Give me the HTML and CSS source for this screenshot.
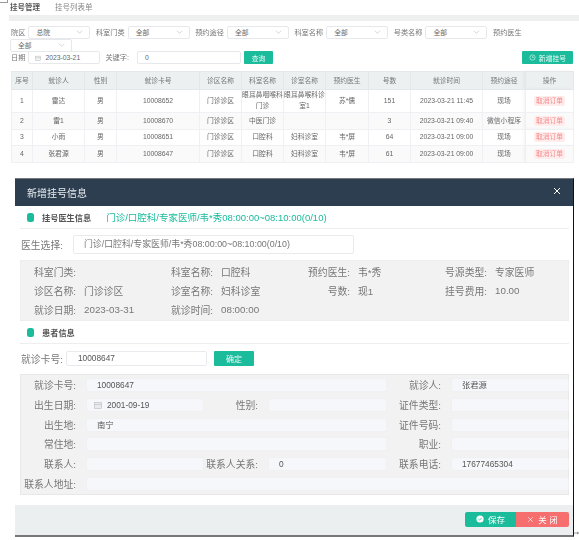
FILE: index.html
```html
<!DOCTYPE html>
<html lang="zh-CN">
<head>
<meta charset="utf-8">
<title>新增挂号信息</title>
<link rel="stylesheet" href="styles.css">
</head>
<body>
<div class="page">
  <span class="corner"></span>
  <section class="list">
    <div class="crumb"><b>挂号管理</b><span>挂号列表单</span></div>
    <div class="band"></div>
    <div class="filters">
      <label class="fl">院区</label><div class="sel">总院<svg class="chev" viewBox="0 0 8 4"><path d="M1 .5 4 3.5 7 .5"/></svg></div>
      <label class="fl">科室门类</label><div class="sel">全部<svg class="chev" viewBox="0 0 8 4"><path d="M1 .5 4 3.5 7 .5"/></svg></div>
      <label class="fl">预约途径</label><div class="sel">全部<svg class="chev" viewBox="0 0 8 4"><path d="M1 .5 4 3.5 7 .5"/></svg></div>
      <label class="fl">科室名称</label><div class="sel">全部<svg class="chev" viewBox="0 0 8 4"><path d="M1 .5 4 3.5 7 .5"/></svg></div>
      <label class="fl">号类名称</label><div class="sel">全部<svg class="chev" viewBox="0 0 8 4"><path d="M1 .5 4 3.5 7 .5"/></svg></div>
      <label class="fl">预约医生</label><div class="sel wrapsel">全部<svg class="chev" viewBox="0 0 8 4"><path d="M1 .5 4 3.5 7 .5"/></svg></div>
    </div>
    <div class="search">
      <label class="fl">日期</label>
      <div class="sel date"><svg class="cal" viewBox="0 0 8 8"><rect x=".5" y="1.5" width="7" height="6"/><path d="M.5 3.5h7"/></svg>2023-03-21</div>
      <label class="fl kw">关键字:</label>
      <div class="sel keyword">0</div>
      <button class="btn query">查询</button>
      <button class="btn add"><svg class="clock" viewBox="0 0 8 8"><circle cx="4" cy="4" r="3"/><path d="M4 2.5V4h1.5"/></svg>新增挂号</button>
    </div>
    <table class="grid">
      <colgroup>
        <col class="c1"><col class="c2"><col class="c3"><col class="c4"><col class="c5"><col class="c6">
        <col class="c7"><col class="c8"><col class="c9"><col class="c10"><col class="c11"><col class="c12">
      </colgroup>
      <thead>
        <tr><th>序号</th><th>就诊人</th><th>性别</th><th>就诊卡号</th><th>诊区名称</th><th>科室名称</th><th>诊室名称</th><th>预约医生</th><th>号数</th><th>就诊时间</th><th>预约途径</th><th class="op">操作</th></tr>
      </thead>
      <tbody>
        <tr class="tall"><td>1</td><td>雷达</td><td>男</td><td>10008652</td><td>门诊诊区</td><td>眼耳鼻咽喉科门诊</td><td>眼耳鼻喉科诊室1</td><td>苏*儒</td><td>151</td><td>2023-03-21 11:45</td><td>现场</td><td class="op"><span class="cancel">取消订单</span></td></tr>
        <tr class="alt"><td>2</td><td>雷1</td><td>男</td><td>10008670</td><td>门诊诊区</td><td>中医门诊</td><td></td><td></td><td>3</td><td>2023-03-21 09:40</td><td class="nw">微信小程序</td><td class="op"><span class="cancel">取消订单</span></td></tr>
        <tr><td>3</td><td>小雨</td><td>男</td><td>10008651</td><td>门诊诊区</td><td>口腔科</td><td>妇科诊室</td><td>韦*屏</td><td>64</td><td>2023-03-21 09:00</td><td>现场</td><td class="op"><span class="cancel">取消订单</span></td></tr>
        <tr class="alt"><td>4</td><td>张君源</td><td>男</td><td>10008647</td><td>门诊诊区</td><td>口腔科</td><td>妇科诊室</td><td>韦*屏</td><td>61</td><td>2023-03-21 09:00</td><td>现场</td><td class="op"><span class="cancel">取消订单</span></td></tr>
      </tbody>
    </table>
  </section>

  <section class="dialog">
    <header class="dhead">
      <h1>新增挂号信息</h1>
      <svg class="close" viewBox="0 0 8 8"><path d="M1 1 7 7M7 1 1 7"/></svg>
    </header>
    <div class="dbody">
      <div class="sect first">
        <i class="pill"></i><b>挂号医生信息</b>
        <span class="picked">门诊/口腔科/专家医师/韦*秀08:00:00~08:10:00(0/10)</span>
      </div>
      <div class="docrow">
        <label>医生选择:</label>
        <div class="docsel">门诊/口腔科/专家医师/韦*秀08:00:00~08:10:00(0/10)</div>
      </div>
      <div class="info">
        <div class="pair"><label>科室门类:</label><span></span></div>
        <div class="pair"><label>科室名称:</label><span>口腔科</span></div>
        <div class="pair"><label>预约医生:</label><span>韦*秀</span></div>
        <div class="pair"><label>号源类型:</label><span>专家医师</span></div>
        <div class="pair"><label>诊区名称:</label><span>门诊诊区</span></div>
        <div class="pair"><label>诊室名称:</label><span>妇科诊室</span></div>
        <div class="pair"><label>号数:</label><span>现1</span></div>
        <div class="pair"><label>挂号费用:</label><span>10.00</span></div>
        <div class="pair"><label>就诊日期:</label><span>2023-03-31</span></div>
        <div class="pair"><label>就诊时间:</label><span>08:00:00</span></div>
      </div>
      <div class="sect second"><i class="pill"></i><b>患者信息</b></div>
      <div class="cardrow">
        <label>就诊卡号:</label>
        <div class="cardinput">10008647</div>
        <button class="btn confirm">确定</button>
      </div>
      <div class="form">
        <label>就诊卡号:</label><div class="in s3">10008647</div>
        <label>就诊人:</label><div class="in">张君源</div>

        <label>出生日期:</label><div class="in datein"><svg class="cal" viewBox="0 0 8 8"><rect x=".5" y="1.5" width="7" height="6"/><path d="M.5 3.5h7"/></svg>2001-09-19</div>
        <label>性别:</label><div class="in"></div>
        <label>证件类型:</label><div class="in"></div>

        <label>出生地:</label><div class="in s3">南宁</div>
        <label>证件号码:</label><div class="in"></div>

        <label>常住地:</label><div class="in s3"></div>
        <label>职业:</label><div class="in"></div>

        <label>联系人:</label><div class="in"></div>
        <label>联系人关系:</label><div class="in">0</div>
        <label>联系电话:</label><div class="in">17677465304</div>

        <label>联系人地址:</label><div class="in s5"></div>
      </div>
    </div>
    <footer class="dfoot">
      <button class="fbtn save"><svg class="ok" viewBox="0 0 8 8"><circle cx="4" cy="4" r="3.6"/><path d="M2.4 4 3.6 5.1 5.7 3"/></svg>保存</button>
      <button class="fbtn shut"><svg class="x" viewBox="0 0 8 8"><path d="M1.5 1.5 6.5 6.5M6.5 1.5 1.5 6.5"/></svg>关 闭</button>
    </footer>
  </section>
  <svg class="cursor" viewBox="0 0 6 6"><path d="M0 3h6M4.5 1.5V4.5"/></svg>
</div>
</body>
</html>
```

FILE: styles.css
```css
* { box-sizing: border-box; }
html, body { margin: 0; background: #fff; }
body {
  font-family: "Liberation Sans", "Noto Sans CJK SC", sans-serif;
  color: #666;
  overflow: hidden;
}
.page { position: relative; width: 579px; height: 540px; filter: blur(.3px); }
.corner { position: absolute; left: 0; top: 0; width: 8px; height: 3px; border: solid #999; border-width: 0 1px 1px 0; }
.cursor { position: absolute; left: 574px; top: 530px; width: 5px; height: 6px; fill: none; stroke: #666; stroke-width: .8; }

.list { height: 178px; padding-left: 9px; }
.crumb { height: 15px; padding: 3px 0 0 1px; font-size: 7.5px; line-height: 10px; color: #777; display: flex; }
.crumb b { width: 45px; color: #555; }
.crumb span { color: #888; }
.band { height: 6px; background: #eef0f0; }
.filters { display: flex; flex-wrap: wrap; align-items: center; align-content: flex-start; padding: 5px 0 0 2px; height: 30px; }
.fl { font-size: 7.2px; line-height: 13px; margin-right: 3px; white-space: nowrap; color: #777; }
.sel {
  position: relative;
  width: 62px; height: 13px; margin-right: 5.5px;
  border: 1px solid #e6e8ec; border-radius: 2px; background: #fff;
  font-size: 6.8px; line-height: 11px; padding-left: 7px; color: #666;
}
.wrapsel { margin-left: -1px; }
.chev { position: absolute; right: 6px; top: 3px; width: 7px; height: 4px; fill: none; stroke: #bbb; stroke-width: .7; }
.search { display: flex; align-items: center; height: 13px; padding-left: 2px; }
.date { width: 72px; display: flex; align-items: center; padding-left: 6px; margin-right: 5px; }
.cal { width: 6px; height: 6px; margin-right: 4px; fill: #f0f1f3; stroke: #bbb; stroke-width: .6; flex: none; }
.kw { margin-right: 8px; }
.keyword { width: 104px; margin-right: 3px; padding-left: 7px; }
.btn { border: 0; border-radius: 1px; background: #1abc9c; color: #eafaf6; font: inherit; font-size: 6.8px; padding: 0; display: flex; align-items: center; justify-content: center; }
.query { width: 29px; height: 13px; }
.add { width: 51px; height: 13px; margin-left: 249px; }
.clock { width: 7px; height: 7px; margin-right: 3px; fill: none; stroke: #eafaf6; stroke-width: .7; }

.grid { table-layout: fixed; border-collapse: collapse; width: 562px; margin: 6.5px 0 0 2px; font-size: 6.8px; color: #666; text-align: center; }
.c1 { width: 21px; } .c2 { width: 52px; } .c3 { width: 32px; } .c4 { width: 83px; }
.c5 { width: 42px; } .c6 { width: 42px; } .c7 { width: 42px; } .c8 { width: 43px; }
.c9 { width: 42px; } .c10 { width: 72px; } .c11 { width: 43px; } .c12 { width: 48px; }
.grid th { height: 18px; background: #ecf0f1; font-weight: normal; border: 1px solid #e4e8ea; padding: 0; color: #777; }
.grid td { height: 16.5px; border: 1px solid #eef0f4; padding: 0; line-height: 10.5px; }
.grid .tall td { height: 23.5px; }
.grid .alt td { background: #fafafa; }
.grid .nw { white-space: nowrap; overflow: visible; padding: 0; }
.grid .op { box-shadow: -2px 0 3px rgba(0,0,0,.05); background: #fff; }
.grid th.op { background: #ecf0f1; }
.cancel { display: inline-block; width: 31px; height: 10px; line-height: 10px; border-radius: 2px; background: #ffeded; color: #f78989; font-size: 6.8px; white-space: nowrap; }

.dialog { width: 559px; margin-left: 15px; border-top: 1px solid #777; border-right: 1px solid #111; border-bottom: 2px solid #777; height: 359px; display: flex; flex-direction: column; }
.dhead { height: 27px; flex: none; background: #2c3e50; display: flex; align-items: center; justify-content: space-between; padding: 0 12px; }
.dhead h1 { margin: 0; font-size: 10px; font-weight: normal; color: #e9eef0; }
.close { width: 8px; height: 8px; fill: none; stroke: #fff; stroke-width: 1; margin-top: -4px; }
.dbody { flex: 1; padding: 0 4px 0 5px; }
.sect { display: flex; align-items: center; border-bottom: 1px solid #eee; padding-left: 7px; height: 23px; }
.pill { width: 7px; height: 9px; border-radius: 2.5px; background: #1abc9c; margin-right: 8px; }
.sect b { font-size: 8.2px; color: #555; }
.picked { font-size: 9.5px; color: #1abc9c; margin-left: 15px; white-space: nowrap; }
.docrow { display: flex; align-items: center; height: 31px; padding-left: 1px; }
.docrow label { width: 52px; font-size: 9.8px; color: #777; white-space: nowrap; }
.docsel { width: 281px; height: 19px; border: 1px solid #e8eaee; border-radius: 2px; font-size: 8.9px; line-height: 17px; padding-left: 10px; white-space: nowrap; color: #777; }
.info { display: grid; grid-template-columns: repeat(4, 137px); grid-auto-rows: 19px; height: 61px; padding: 1px 0 0; background: #f2f2f2; border: 1px solid #eee; width: 549px; }
.pair { display: flex; align-items: center; font-size: 9.8px; color: #777; }
.pair label { width: 55px; text-align: right; margin-right: 8px; white-space: nowrap; }
.pair span { white-space: nowrap; }
.cardrow { display: flex; align-items: center; height: 29px; padding-left: 1px; margin-bottom: 1px; }
.cardrow label { width: 45px; font-size: 9.8px; color: #777; white-space: nowrap; }
.cardinput { width: 141px; height: 15px; border: 1px solid #e8eaee; border-radius: 2px; font-size: 8.3px; line-height: 13px; padding-left: 11px; margin-right: 7px; color: #555; }
.confirm { width: 40px; height: 15px; font-size: 8px; }
.form {
  display: grid;
  grid-template-columns: 56px 118px 46px 119px 46px 118px;
  column-gap: 9px;
  grid-auto-rows: 14px;
  row-gap: 5.8px;
  width: 549px; height: 121px; padding-top: 3px;
  background: #f2f2f2; border: 1px solid #e8e8e8;
}
.form label { justify-self: end; align-self: center; font-size: 9.8px; color: #777; white-space: nowrap; margin-right: 1px; }
.in { background: #f6f7fa; border: 1px solid #f0f0f3; border-radius: 2px; font-size: 8.3px; line-height: 12px; color: #555; padding-left: 10px; display: flex; align-items: center; }
.s3 { grid-column: span 3; }
.s5 { grid-column: span 5; }
.datein { padding-left: 7px; }
.datein .cal { width: 8px; height: 8px; margin-right: 5px; fill: #e8eaee; }
.dfoot { flex: none; height: 30px; margin-top: 10px; background: #ecefef; display: flex; justify-content: flex-end; align-items: center; padding: 0 4px 2px 0; }
.fbtn { height: 15px; border: 0; padding: 0; font: inherit; font-size: 8.5px; color: #fff; display: flex; align-items: center; justify-content: center; }
.save { background: #1abc9c; border-radius: 2px 0 0 2px; width: 51px; }
.shut { background: #f76e6e; border-radius: 0 2px 2px 0; width: 53px; }
.ok { width: 8px; height: 8px; margin-right: 4px; fill: #fff; stroke: none; }
.ok path { fill: none; stroke: #1abc9c; stroke-width: .8; }
.x { width: 7px; height: 7px; margin-right: 4px; fill: none; stroke: #fff; stroke-width: .8; }
```
